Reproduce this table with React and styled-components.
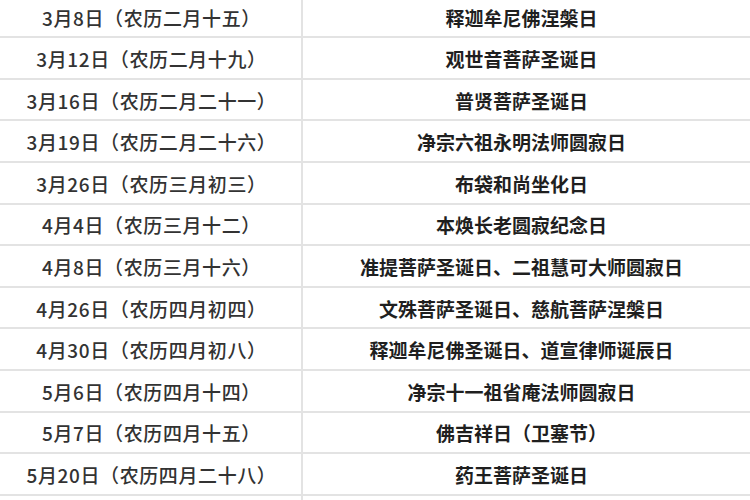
import React from "react";
import styled, { createGlobalStyle } from "styled-components";

const GlobalStyle = createGlobalStyle`
  html, body {
    margin: 0;
    padding: 0;
    background: #ffffff;
    overflow: hidden;
  }
  body {
    font-family: "Noto Sans CJK SC", "Noto Sans", sans-serif;
  }
`;

const Table = styled.div`
  width: 750px;
  height: 500px;
  overflow: hidden;
  display: flex;
  flex-direction: column;
`;

const Rows = styled.div`
  margin-top: -3.3px;
  display: flex;
  flex-direction: column;
`;

const Row = styled.div`
  display: grid;
  grid-template-columns: 303px 1fr;
  height: 41.6px;
  flex: 0 0 41.6px;
  box-sizing: border-box;
  border-bottom: 2px solid #e3e3e3;
`;

const Cell = styled.div`
  display: flex;
  align-items: center;
  justify-content: center;
  box-sizing: border-box;
  white-space: nowrap;
  font-size: 19px;
  line-height: 1;
  padding-top: 1px;
`;

const DateCell = styled(Cell)`
  color: #333333;
  font-weight: 500;
  letter-spacing: 0.6px;
  border-right: 2px solid #e3e3e3;
  padding-left: 2px;
`;

const EventCell = styled(Cell)`
  color: #1f1f1f;
  font-weight: 700;
  padding-right: 10px;
`;

const data = [
  ["3月8日（农历二月十五）", "释迦牟尼佛涅槃日"],
  ["3月12日（农历二月十九）", "观世音菩萨圣诞日"],
  ["3月16日（农历二月二十一）", "普贤菩萨圣诞日"],
  ["3月19日（农历二月二十六）", "净宗六祖永明法师圆寂日"],
  ["3月26日（农历三月初三）", "布袋和尚坐化日"],
  ["4月4日（农历三月十二）", "本焕长老圆寂纪念日"],
  ["4月8日（农历三月十六）", "准提菩萨圣诞日、二祖慧可大师圆寂日"],
  ["4月26日（农历四月初四）", "文殊菩萨圣诞日、慈航菩萨涅槃日"],
  ["4月30日（农历四月初八）", "释迦牟尼佛圣诞日、道宣律师诞辰日"],
  ["5月6日（农历四月十四）", "净宗十一祖省庵法师圆寂日"],
  ["5月7日（农历四月十五）", "佛吉祥日（卫塞节）"],
  ["5月20日（农历四月二十八）", "药王菩萨圣诞日"],
  ["", ""],
];

export default function App() {
  return (
    <>
      <GlobalStyle />
      <Table>
        <Rows>
          {data.map(([d, e], i) => (
            <Row key={i}>
              <DateCell>{d}</DateCell>
              <EventCell>{e}</EventCell>
            </Row>
          ))}
        </Rows>
      </Table>
    </>
  );
}
